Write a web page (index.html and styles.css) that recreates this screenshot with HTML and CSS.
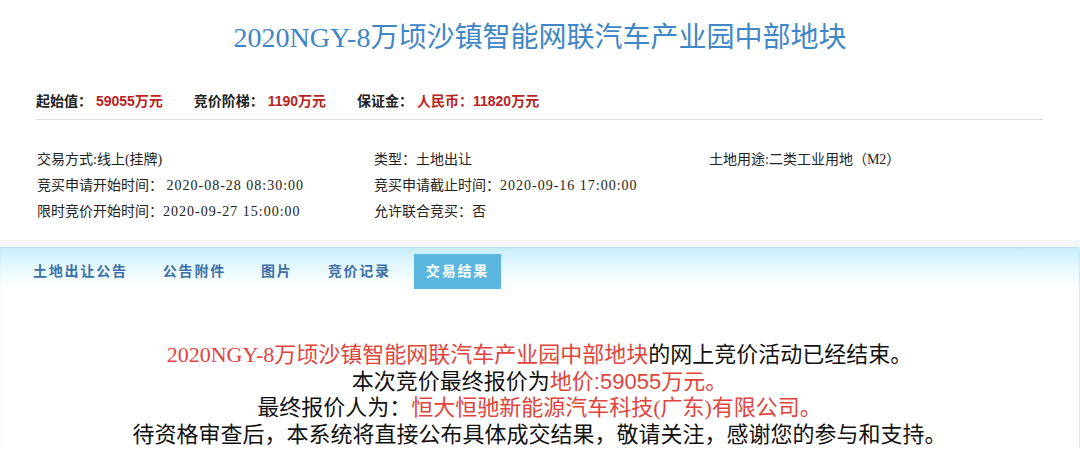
FILE: index.html
```html
<!DOCTYPE html>
<html lang="zh">
<head>
  <meta charset="UTF-8" />
  <title>2020NGY-8万顷沙镇智能网联汽车产业园中部地块</title>
  <link rel="stylesheet" href="styles.css">
</head>
<body>

  <h1 class="title">2020NGY-8万顷沙镇智能网联汽车产业园中部地块</h1>

  <div class="summary">
    <span class="sum-item">起始值： <em>59055万元</em></span>
    <span class="sum-item">竞价阶梯： <em>1190万元</em></span>
    <span class="sum-item">保证金： <em>人民币：11820万元</em></span>
  </div>

  <!-- 基本信息 -->
  <div class="details">
    <div>交易方式:线上(挂牌)</div>
    <div>类型：土地出让</div>
    <div>土地用途:二类工业用地（M2）</div>
    <div>竞买申请开始时间： <span class="time">2020-08-28 08:30:00</span></div>
    <div>竞买申请截止时间：<span class="time">2020-09-16 17:00:00</span></div>
    <div></div>
    <div>限时竞价开始时间：<span class="time">2020-09-27 15:00:00</span></div>
    <div>允许联合竞买：否</div>
    <div></div>
  </div>

  <div class="band"></div>

  <div class="panel">
    <ul class="tabs">
      <li>土地出让公告</li>
      <li>公告附件</li>
      <li>图片</li>
      <li>竞价记录</li>
      <li class="active">交易结果</li>
    </ul>

    <div class="result">
      <p><span class="red">2020NGY-8万顷沙镇智能网联汽车产业园中部地块</span>的网上竞价活动已经结束。</p>
      <p>本次竞价最终报价为<span class="red">地价<span class="num">:59055</span>万元。</span></p>
      <p>最终报价人为：<span class="red">恒大恒驰新能源汽车科技(广东)有限公司。</span></p>
      <p>待资格审查后，本系统将直接公布具体成交结果，敬请关注，感谢您的参与和支持。</p>
    </div>
  </div>

</body>
</html>
```

FILE: styles.css
```css
body {
  margin: 0;
  font-family: "Liberation Serif", "Noto Sans CJK SC", serif;
  color: #222;
  background: #fff;
}
.title {
  margin: 0;
  padding-top: 18px;
  height: 40px;
  line-height: 40px;
  text-align: center;
  font-size: 28px;
  font-weight: normal;
  color: #3f86c6;
}
.summary {
  margin: 33px 37px 0 36px;
  padding-bottom: 8px;
  border-bottom: 1px solid #dcdcdc;
  line-height: 20px;
  font-family: "Liberation Sans", "Noto Sans CJK SC", sans-serif;
  font-size: 14px;
  font-weight: bold;
  color: #222;
  display: flex;
}
.sum-item {
  margin-right: 31px;
}
.sum-item em {
  font-style: normal;
  color: #b8231b;
}
.details {
  display: grid;
  grid-template-columns: 337px 335px auto;
  padding: 27px 0 15px 37px;
  font-size: 14px;
  line-height: 26px;
  color: #222;
}
.time {
  letter-spacing: 1px;
}
.band {
  height: 7px;
  background: #f5f6f6;
}
.panel {
  border-right: 1px solid #d6eaf0;
  background: linear-gradient(#c6eef9 0, #e6f8fd 20px, #ffffff 42px);
  box-shadow: inset 0 1px 1px #b7dce6;
  padding-top: 7px;
}
.tabs {
  list-style: none;
  margin: 0;
  padding: 0 0 0 21px;
  display: flex;
  gap: 11px;
}
.tabs li {
  height: 35px;
  line-height: 33px;
  padding: 0 12px;
  font-family: "Noto Sans CJK SC", sans-serif;
  font-size: 14px;
  font-weight: bold;
  letter-spacing: 1.8px;
  color: #3b6fa8;
}
.tabs li.active {
  background: #5bb7e0;
  color: #fff;
}
.result {
  padding-top: 53px;
  text-align: center;
  font-size: 22px;
  line-height: 26.5px;
  color: #111;
}
.result p {
  margin: 0;
}
.red {
  color: #e0443c;
}
.num {
  font-family: "Liberation Sans", sans-serif;
}
```
